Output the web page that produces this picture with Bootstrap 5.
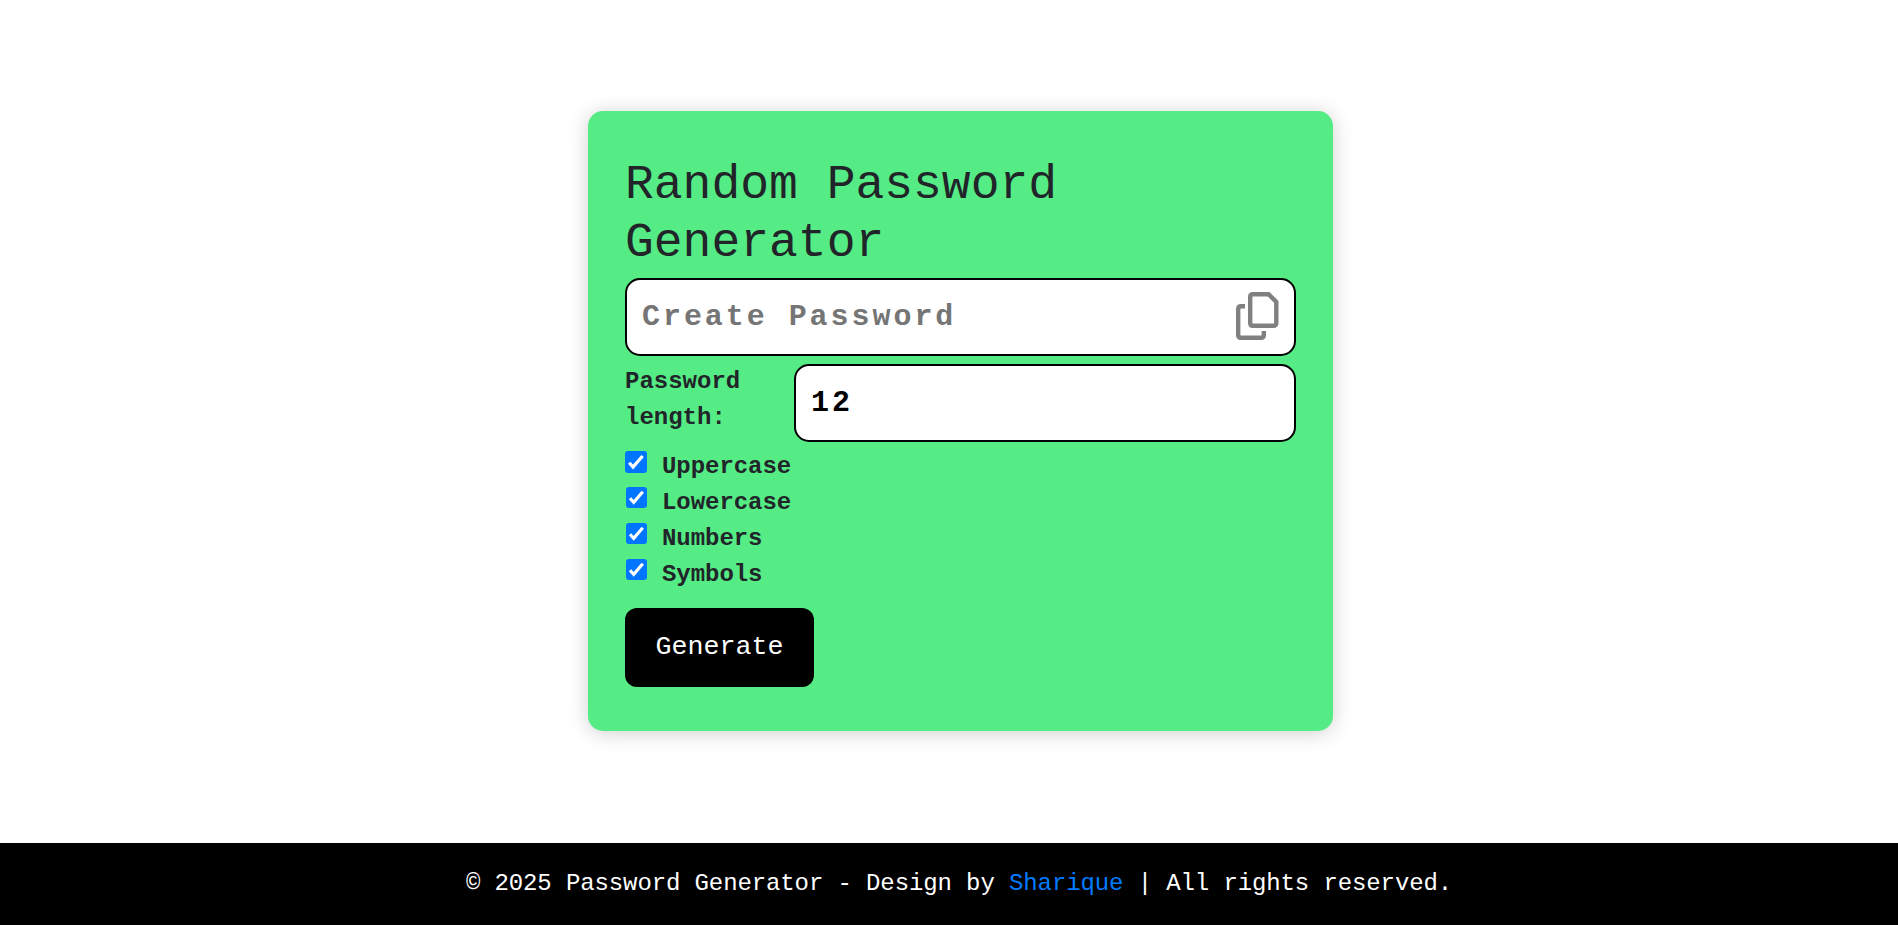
<!DOCTYPE html>
<html lang="en">
<head>
<meta charset="utf-8">
<meta name="viewport" content="width=device-width, initial-scale=1">
<title>Random Password Generator</title>
<link href="https://cdn.jsdelivr.net/npm/bootstrap@5.3.0/dist/css/bootstrap.min.css" rel="stylesheet">
<style>
  body { font-family: "Courier New", "Liberation Mono", monospace; font-size: 24px; line-height: 36px; color: #212529; }
  .stage { padding: 111px 0 0 23px; }
  .generator { width: 745px; height: 620px; padding: 46px 37px 0; background: #55ec85; border-radius: 15px; box-shadow: 0 2px 20px rgba(0, 0, 0, .19); }
  .generator h1 { font-size: 48px; font-weight: 300; line-height: 57.5px; margin-bottom: 6px; }
  .pw-box { height: 78px; border: 2px solid #000; border-radius: 15px; background: #fff; padding: 0 15px; }
  .pw-box input { min-width: 0; padding: 0; border: 0; outline: 0; background: transparent; color: #000; font-size: 30px; font-weight: 700; letter-spacing: 2.95px; }
  .pw-box input::placeholder { color: #757575; opacity: 1; }
  .pw-box svg { margin-bottom: 2px; }
  .gap-row { margin-top: 8px; }
  .length-label { width: 169px; }
  .options { padding-top: 7px; }
  .options label { height: 36px; font-weight: 600; }
  .options label span { letter-spacing: -.05px; }
  .options input { appearance: none; width: 21px; height: 21px; margin: 2px 15px 0 1px; border-radius: 3px; background: #0075ff url("data:image/svg+xml,%3Csvg xmlns='http://www.w3.org/2000/svg' viewBox='0 0 21 21'%3E%3Cpath d='M4 11.2 7.7 15.3 16.8 4.8' fill='none' stroke='%23fff' stroke-width='3.1'/%3E%3C/svg%3E"); }
  .options label:first-child input { width: 22px; height: 22px; margin: 2px 15px 0 0; }
  .btn-generate, .btn-generate:hover { width: 189px; height: 79px; margin-top: 15px; padding: 0 0 1px; border: 0; border-radius: 12px; background: #000; color: #fff; font-size: 26.67px; }
  .site-footer { height: 82px; padding: 23px 0 0 20px; background: #000; color: #fff; letter-spacing: -.11px; }
  .site-footer a { color: #007bff; text-decoration: none; }
</style>
</head>
<body class="d-flex flex-column min-vh-100 bg-white">
<main class="stage flex-grow-1 d-flex justify-content-center align-items-start">
  <section class="generator">
    <h1>Random Password Generator</h1>
    <div class="pw-box d-flex align-items-center">
      <input type="text" class="flex-grow-1" placeholder="Create Password" aria-label="Password" readonly>
      <svg width="43" height="48" viewBox="0 0 43 48" fill="none" stroke="#808080" stroke-width="4.4" role="img" aria-label="Copy">
        <path d="M17 2.2H32.5L40.3 10V31Q40.3 33.8 37.3 33.8H17Q14.2 33.8 14.2 31V5Q14.2 2.2 17 2.2Z"/>
        <path d="M9 14.2H5Q2.2 14.2 2.2 17V43Q2.2 45.8 5 45.8H25Q27.8 45.8 27.8 43V39"/>
      </svg>
    </div>
    <div class="gap-row d-flex align-items-start">
      <label class="length-label flex-shrink-0 fw-semibold" for="length">Password<br>length:</label>
      <div class="pw-box d-flex align-items-center flex-grow-1">
        <input id="length" type="text" class="w-100" value="12">
      </div>
    </div>
    <div class="options d-flex flex-column align-items-start">
      <label class="d-flex align-items-start"><input type="checkbox" checked><span>Uppercase</span></label>
      <label class="d-flex align-items-start"><input type="checkbox" checked><span>Lowercase</span></label>
      <label class="d-flex align-items-start"><input type="checkbox" checked><span>Numbers</span></label>
      <label class="d-flex align-items-start"><input type="checkbox" checked><span>Symbols</span></label>
    </div>
    <button type="button" class="btn btn-generate">Generate</button>
  </section>
</main>
<footer class="site-footer text-center">© 2025 Password Generator - Design by <a href="#">Sharique</a> | All rights reserved.</footer>
<script src="https://cdn.jsdelivr.net/npm/bootstrap@5.3.0/dist/js/bootstrap.bundle.min.js"></script>
</body>
</html>
